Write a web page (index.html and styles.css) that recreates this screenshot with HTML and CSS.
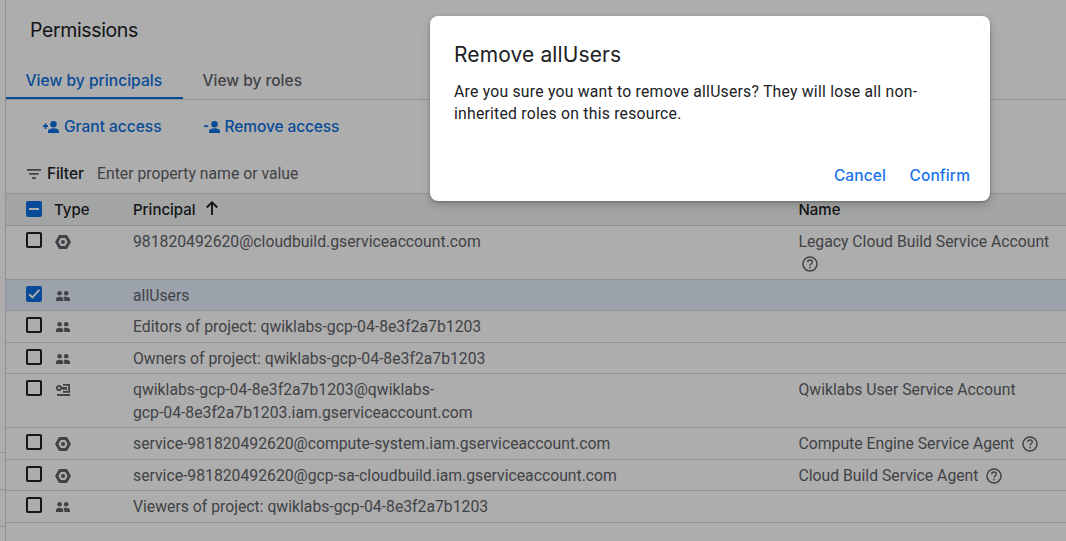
FILE: index.html
```html
<!DOCTYPE html>
<html lang="en">
<head>
<meta charset="utf-8">
<title>Permissions</title>
<link rel="stylesheet" href="styles.css">
</head>
<body>
<svg width="0" height="0" class="defs">
  <symbol id="hex" viewBox="0 0 16 14"><path fill-rule="evenodd" d="M4 0h8l4 7-4 7H4L0 7zM5.700 2.900L3.400 7l2.300 4.100h4.600L12.600 7l-2.300-4.100z"/><circle cx="8" cy="7" r="2.100"/></symbol>
  <symbol id="group" viewBox="0 0 14 10"><circle cx="3.600" cy="2.300" r="2.300"/><circle cx="10.200" cy="2.300" r="2.300"/><path d="M0 10V8.200C0 6.600 2 5.800 3.600 5.800s3.600.8 3.600 2.400V10z"/><path d="M8.300 10V8.200c0-.9-.4-1.600-.9-2.100 2.600-.7 6.600-.1 6.600 2.100V10z"/></symbol>
  <symbol id="key" viewBox="0 0 14 12"><circle cx="3" cy="4" r="2.100" fill="none" stroke="currentColor" stroke-width="1.900"/><path d="M5 3.100h6v3.200H9.500V5H8.500v1.300H7V5H5zM7 0h7v8.700H7V7.100h5.200V1.700H7zM1 10.100h13v1.900H1z"/></symbol>
  <symbol id="help" viewBox="0 0 16 16"><circle cx="8" cy="8" r="7" fill="none" stroke="currentColor" stroke-width="1.500"/><path d="M5.700 6.200C5.700 4.900 6.700 4 8 4s2.300.9 2.300 2.100C10.300 7.600 8 7.900 8 9.700" fill="none" stroke="currentColor" stroke-width="1.400"/><circle cx="8" cy="11.600" r=".95"/></symbol>
  <symbol id="person" viewBox="0 0 11 12"><circle cx="5.500" cy="3.200" r="3.200"/><path d="M0 12V10.200C0 8.200 3.500 7.300 5.500 7.300S11 8.200 11 10.200V12z"/></symbol>
</svg>
<div class="app">
  <aside class="side"><i></i><i></i><i></i></aside>
  <main class="panel">
    <h1 class="title">Permissions</h1>
    <nav class="tabs"><a class="tab active">View by principals</a><a class="tab">View by roles</a></nav>
    <div class="actions">
      <a class="action"><svg class="pm" viewBox="0 0 5 12"><path d="M0 4.300h5V6H0zM1.700 2.500h1.700v5.500H1.700z"/></svg><svg class="person"><use href="#person"/></svg><span>Grant access</span></a>
      <a class="action remove"><svg class="pm" viewBox="0 0 5 12"><path d="M0 4.300h4.300V6H0z"/></svg><svg class="person"><use href="#person"/></svg><span>Remove access</span></a>
    </div>
    <div class="filter"><svg class="ficon" viewBox="0 0 14 10"><path d="M0 0h14v1.700H0zM2.300 4.100h9.400v1.700H2.300zM5 8.300h4V10H5z"/></svg><b>Filter</b><span>Enter property name or value</span></div>
    <div class="table">
      <div class="row head"><span class="box on"><svg viewBox="0 0 16 16"><path d="M3 8h10"/></svg></span><span class="type">Type</span><span class="principal"><span>Principal</span><svg class="arrow" viewBox="0 0 12 14"><path d="M6 14V1.500M.8 6.500L6 1.300l5.200 5.200"/></svg></span><span class="name">Name</span></div>
      <div class="row tall"><span class="box"></span><span class="type"><svg class="hex"><use href="#hex"/></svg></span><span class="principal">981820492620@cloudbuild.gserviceaccount.com</span><span class="name">Legacy Cloud Build Service Account <svg class="help wrap"><use href="#help"/></svg></span></div>
      <div class="row short selected"><span class="box on"><svg viewBox="0 0 16 16"><path d="M3.200 8.200l3.200 3.200 7-7.500"/></svg></span><span class="type"><svg class="group"><use href="#group"/></svg></span><span class="principal">allUsers</span></div>
      <div class="row"><span class="box"></span><span class="type"><svg class="group"><use href="#group"/></svg></span><span class="principal">Editors of project: qwiklabs-gcp-04-8e3f2a7b1203</span></div>
      <div class="row short"><span class="box"></span><span class="type"><svg class="group"><use href="#group"/></svg></span><span class="principal">Owners of project: qwiklabs-gcp-04-8e3f2a7b1203</span></div>
      <div class="row tall"><span class="box"></span><span class="type"><svg class="key"><use href="#key"/></svg></span><span class="principal">qwiklabs-gcp-04-8e3f2a7b1203@qwiklabs-<br>gcp-04-8e3f2a7b1203.iam.gserviceaccount.com</span><span class="name">Qwiklabs User Service Account</span></div>
      <div class="row"><span class="box"></span><span class="type"><svg class="hex"><use href="#hex"/></svg></span><span class="principal">service-981820492620@compute-system.iam.gserviceaccount.com</span><span class="name">Compute Engine Service Agent <svg class="help"><use href="#help"/></svg></span></div>
      <div class="row short"><span class="box"></span><span class="type"><svg class="hex"><use href="#hex"/></svg></span><span class="principal">service-981820492620@gcp-sa-cloudbuild.iam.gserviceaccount.com</span><span class="name">Cloud Build Service Agent <svg class="help"><use href="#help"/></svg></span></div>
      <div class="row"><span class="box"></span><span class="type"><svg class="group"><use href="#group"/></svg></span><span class="principal">Viewers of project: qwiklabs-gcp-04-8e3f2a7b1203</span></div>
    </div>
  </main>
</div>
<div class="backdrop">
  <section class="dialog" role="dialog">
    <h2>Remove allUsers</h2>
    <p>Are you sure you want to remove allUsers? They will lose all non-<br>inherited roles on this resource.</p>
    <div class="buttons"><a>Cancel</a><a>Confirm</a></div>
  </section>
</div>
</body>
</html>
```

FILE: styles.css
```css
* { box-sizing: border-box; }
body { margin: 0; height: 541px; overflow: hidden; background: #fff; font: 15.75px/23px Roboto, sans-serif; color: #5f6368; }
.defs { position: absolute; }
svg { fill: currentColor; flex: none; display: block; }
.app { display: flex; height: 541px; }
.side { width: 6px; border-right: 1px solid #d5d7db; padding-top: 452px; }
.side i { display: block; height: 37px; border-top: 1px solid #d5d7db; }
.panel { flex: 1; min-width: 0; }
.title, .tabs, .actions, .filter b, .head, .dialog h2, .buttons { font-family: Inter, sans-serif; }
.title { margin: 0; height: 61px; padding: 18px 24px 0; font-size: 19.5px; line-height: 24px; font-weight: 400; letter-spacing: -.37px; color: #202124; }
.tabs { display: flex; height: 39px; border-bottom: 1px solid #d5d7db; font-size: 15.5px; font-weight: 500; }
.tab { height: 38px; padding: 8px 20px 0 19.500px; white-space: nowrap; }
.tab.active { width: 177px; color: #0b6fe0; border-bottom: 2px solid #0b6fe0; letter-spacing: .05px; }
.actions { display: flex; height: 54px; padding: 15px 37px 0; gap: 42px; color: #0b6fe0; font-size: 15.5px; font-weight: 500; }
.action { display: flex; white-space: nowrap; }
.action.remove { letter-spacing: -.1px; }
.action svg { height: 12px; margin-top: 6px; }
.pm { width: 5px; }
.person { width: 11px; }
.action span { margin-left: 5px; }
.filter { display: flex; height: 39px; padding: 8px 21px 0; }
.ficon { width: 14px; height: 10px; margin-top: 7px; }
.filter b { width: 50px; margin-left: 6px; font-size: 15.5px; font-weight: 500; letter-spacing: -.1px; color: #202124; }
.filter span { line-height: 24px; }
.table { border-top: 1px solid #d5d7db; }
.row { display: grid; grid-template-columns: 28px 79px 665.5px 1fr; height: 32px; padding-left: 20px; border-bottom: 1px solid #d5d7db; white-space: nowrap; }
.row > span { padding-top: 4px; }
.row.short { height: 31px; }
.row.tall { height: 54px; }
.row.selected { background: #e5effe; }
.row.head { background: #f1f3f4; color: #202124; font-size: 15px; font-weight: 500; }
.row > .box { width: 16px; height: 16px; margin-top: 6px; border: 2px solid #202124; border-radius: 2px; padding: 0; }
.row > .box.on { border: 0; background: #0b6fe0; }
.row.head > .box { margin-top: 7px; }
.box svg { width: 16px; height: 16px; fill: none; stroke: #fff; stroke-width: 2; }
.hex { width: 16px; height: 14px; margin: 5px 0 0 1px; }
.group { width: 14px; height: 10px; margin: 6.500px 0 0 2px; }
.key { width: 14px; height: 12px; margin: 6px 0 0 2px; }
.principal .arrow { width: 12px; height: 14px; fill: none; stroke: currentColor; stroke-width: 1.9; margin: 3px 0 0 10px; }
.head .principal { display: flex; }
.help { display: inline-block; width: 16px; height: 16px; vertical-align: -3px; margin-left: 4px; }
.help.wrap { display: block; margin: 3px 0 0 3px; }
.backdrop { position: absolute; inset: 0; padding: 16px 0 0 430px; background: rgba(0,0,0,.32); }
.dialog { width: 560px; height: 185px; padding: 25px 20px 0 24px; border-radius: 8px; background: #fff; color: #202124; box-shadow: 0 1px 3px rgba(0,0,0,.3), 0 4px 8px 1px rgba(0,0,0,.13); }
.dialog h2 { margin: 0; font-size: 21px; line-height: 28px; font-weight: 400; letter-spacing: .12px; }
.dialog p { margin: 12px 0 0; line-height: 22px; letter-spacing: .23px; white-space: nowrap; }
.buttons { display: flex; justify-content: flex-end; gap: 23.500px; margin-top: 39px; font-size: 15.5px; font-weight: 500; letter-spacing: .1px; color: #1a73e8; }
```
